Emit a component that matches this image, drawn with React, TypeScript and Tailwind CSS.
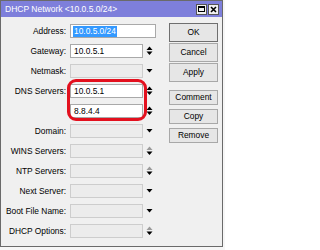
import React from "react";

type Arrow = "none" | "down" | "updown" | "updown-dim";

type Row = {
  label: string;
  value?: string;
  arrow: Arrow;
  wide?: boolean;
  selected?: boolean;
  hideLabel?: boolean;
};

const rows: Row[] = [
  { label: "Address:", value: "10.0.5.0/24", arrow: "none", wide: true, selected: true },
  { label: "Gateway:", value: "10.0.5.1", arrow: "updown" },
  { label: "Netmask:", arrow: "down" },
  { label: "DNS Servers:", value: "10.0.5.1", arrow: "updown" },
  { label: "", value: "8.8.4.4", arrow: "updown", hideLabel: true },
  { label: "Domain:", arrow: "down" },
  { label: "WINS Servers:", arrow: "updown-dim" },
  { label: "NTP Servers:", arrow: "updown-dim" },
  { label: "Next Server:", arrow: "down" },
  { label: "Boot File Name:", arrow: "down" },
  { label: "DHCP Options:", arrow: "updown-dim" },
];

function ArrowIcon({ kind }: { kind: Arrow }) {
  if (kind === "none") return null;
  if (kind === "down") {
    return (
      <svg width="7" height="14" viewBox="0 0 7 14" className="block">
        <polygon points="0.5,5 6.5,5 3.5,8.5" fill="#000" />
      </svg>
    );
  }
  const top = kind === "updown-dim" ? "#9a9a9a" : "#000";
  return (
    <svg width="7" height="14" viewBox="0 0 7 14" className="block">
      <polygon points="3.5,2.5 6.5,6 0.5,6" fill={top} />
      <polygon points="0.5,7.5 6.5,7.5 3.5,11" fill="#000" />
    </svg>
  );
}

function Field({ row }: { row: Row }) {
  const filled = row.value !== undefined;
  return (
    <div className="flex h-[14px] items-center">
      <div className="w-[66px] pr-[1px] text-right leading-[14px] whitespace-nowrap">
        {row.hideLabel ? "" : row.label}
      </div>
      <div
        className={`ml-[3px] h-[14px] flex items-center border ${
          row.wide ? "w-[86px]" : "w-[73px]"
        } ${filled ? "bg-white border-[#a9a9a9]" : "bg-[#ececec] border-[#cdcdcd]"}`}
      >
        {filled && (
          <span
            className={`ml-[2px] px-[1px] leading-[11px] ${
              row.selected ? "bg-[#3399ff] text-white" : "text-black"
            }`}
          >
            {row.value}
          </span>
        )}
      </div>
      <div className="ml-[3px] w-[7px]">
        <ArrowIcon kind={row.arrow} />
      </div>
    </div>
  );
}

function Btn({ label, tall, primary }: { label: string; tall?: boolean; primary?: boolean }) {
  return (
    <div
      className={`w-[49px] flex items-center justify-center border bg-[#e6e6e6] ${
        tall ? "h-[19px]" : "h-[15px]"
      } ${primary ? "border-[#6f6f6f]" : "border-[#a8a8a8]"}`}
    >
      {label}
    </div>
  );
}

export default function App() {
  return (
    <div
      className="relative w-[225px] h-[250px] bg-[#f6f6f6] text-[8.4px] text-black"
      style={{ fontFamily: '"Liberation Sans", Arial, sans-serif' }}
    >
      <div className="w-[223px] h-[247px] border border-[#6a6a6a] bg-[#f0f0f0] flex flex-col">
        {/* title bar */}
        <div className="h-[16px] bg-[#7e7fdb] flex items-center pl-[4px] pr-[3px] text-white text-[8.5px]">
          <span className="leading-none">DHCP Network &lt;10.0.5.0/24&gt;</span>
          <div className="ml-auto flex gap-[1px]">
            <div className="w-[11px] h-[11px] bg-[#f0f0f0] border border-[#555] flex items-center justify-center">
              <div className="w-[7px] h-[6px] border border-black border-t-2" />
            </div>
            <div className="w-[11px] h-[11px] bg-[#f0f0f0] border border-[#555] flex items-center justify-center">
              <svg width="7" height="7" viewBox="0 0 7 7">
                <path d="M1 1 L6 6 M6 1 L1 6" stroke="#000" strokeWidth="1.6" />
              </svg>
            </div>
          </div>
        </div>

        {/* body */}
        <div className="flex flex-1">
          <div className="flex flex-col gap-[6px] pt-[7px]">
            {rows.map((r, i) => (
              <Field key={i} row={r} />
            ))}
          </div>
          <div className="ml-auto mr-[4px] flex flex-col pt-[6px]">
            <div className="flex flex-col gap-[1px]">
              <Btn label="OK" tall primary />
              <Btn label="Cancel" tall />
              <Btn label="Apply" tall />
            </div>
            <div className="mt-[8px] flex flex-col gap-[4px]">
              <Btn label="Comment" />
              <Btn label="Copy" />
              <Btn label="Remove" />
            </div>
          </div>
        </div>
      </div>

      {/* red highlight annotation */}
      <div className="absolute left-[67px] top-[79px] w-[80px] h-[42px] border-[3px] border-[#e3101e] rounded-[9px]" />
    </div>
  );
}
